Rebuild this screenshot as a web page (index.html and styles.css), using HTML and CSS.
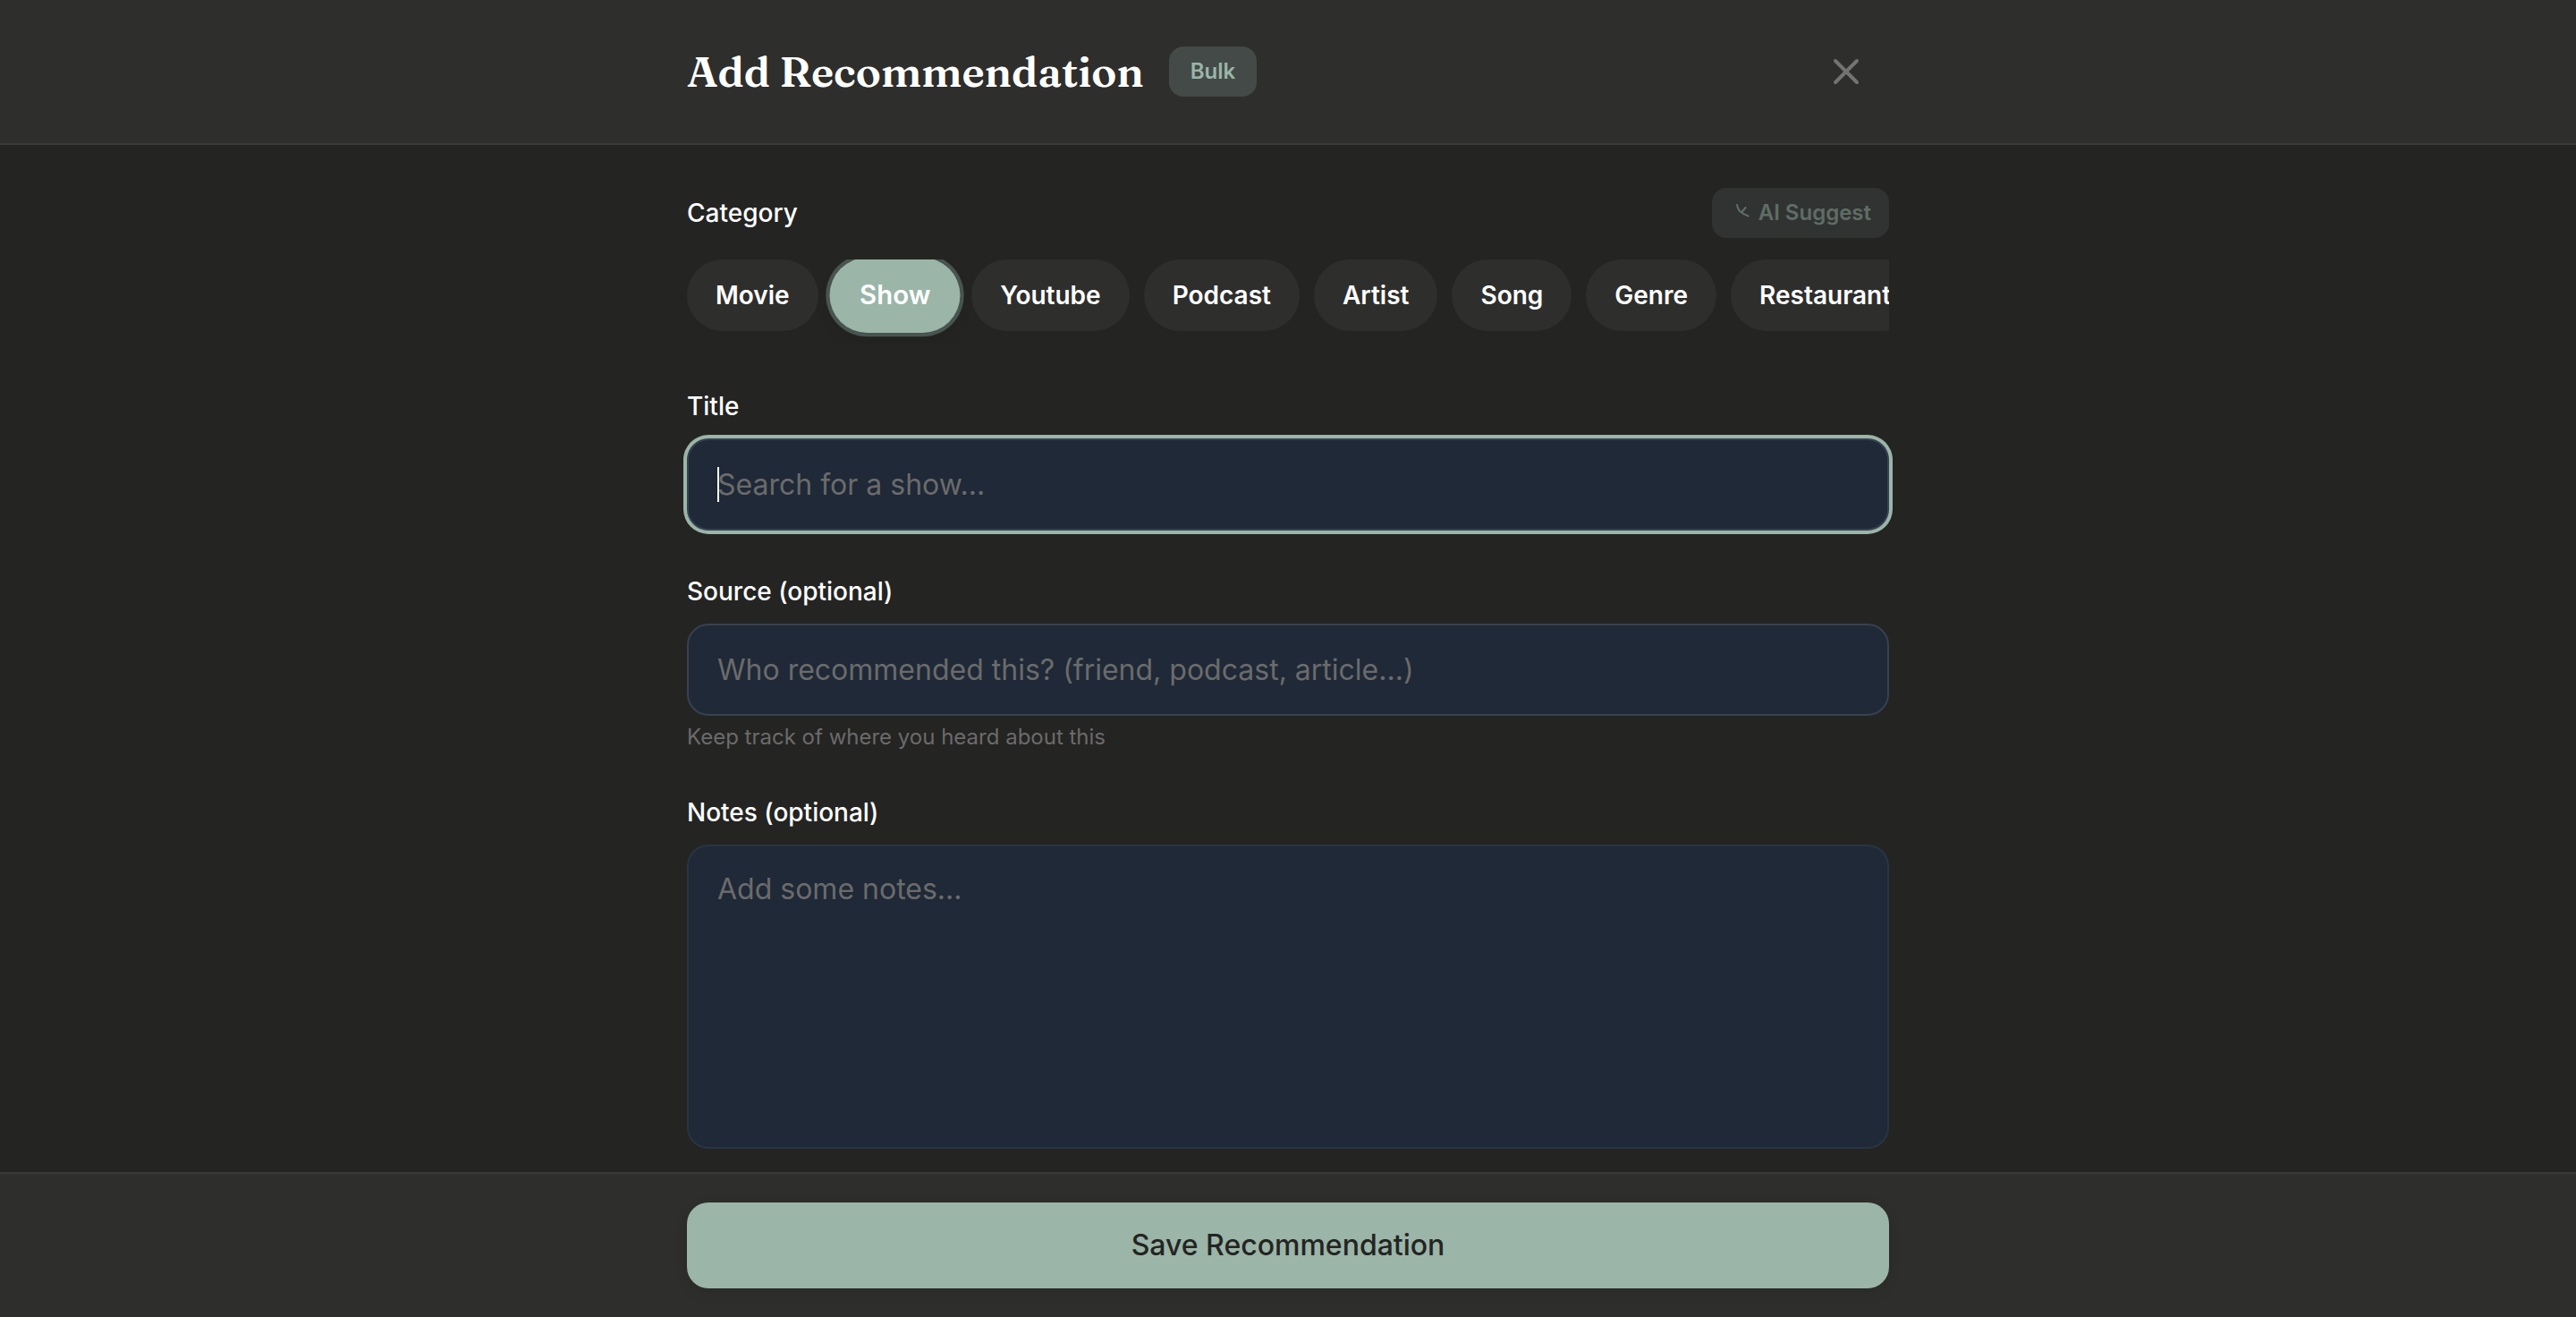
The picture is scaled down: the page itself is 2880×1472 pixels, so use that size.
FILE: index.html
```html
<!DOCTYPE html>
<html lang="en">
<head>
<meta charset="utf-8">
<meta name="viewport" content="width=device-width, initial-scale=1">
<title>Add Recommendation</title>
<link rel="stylesheet" href="styles.css">
</head>
<body>
<form class="screen">
  <header class="topbar">
    <div class="container topbar-row">
      <div class="heading">
        <h1 class="title">Add Recommendation</h1>
        <button type="button" class="chip-button">Bulk</button>
      </div>
      <button type="button" class="close" aria-label="Close">
        <svg class="close-icon" viewBox="0 0 24 24" fill="none" stroke="currentColor" stroke-width="2" stroke-linecap="round" stroke-linejoin="round"><path d="M6 18L18 6M6 6l12 12"/></svg>
      </button>
    </div>
  </header>

  <main class="content">
    <div class="container fields">
      <section class="category">
        <div class="category-head">
          <h2 class="label">Category</h2>
          <button type="button" class="chip-button suggest" disabled>
            <svg class="suggest-icon" viewBox="0 0 28 28" fill="none" stroke="currentColor" stroke-width="2" stroke-linecap="round" stroke-linejoin="round"><path d="M8 5C8.500 8 10 11.500 13 13.500C15 15.200 18 16.500 20.500 17.500M13 13.500L17.500 8"/></svg>
            AI Suggest
          </button>
        </div>
        <div class="pills">
          <button type="button" class="pill">Movie</button>
          <button type="button" class="pill pill-active" aria-pressed="true">Show</button>
          <button type="button" class="pill">Youtube</button>
          <button type="button" class="pill">Podcast</button>
          <button type="button" class="pill">Artist</button>
          <button type="button" class="pill">Song</button>
          <button type="button" class="pill">Genre</button>
          <button type="button" class="pill">Restaurant</button>
        </div>
      </section>

      <div class="field">
        <label class="label" for="title">Title</label>
        <div class="input-wrap">
          <input class="input input-focused" id="title" type="text" placeholder="Search for a show...">
          <span class="caret" aria-hidden="true"></span>
        </div>
      </div>

      <div class="field">
        <label class="label" for="source">Source (optional)</label>
        <input class="input" id="source" type="text" placeholder="Who recommended this? (friend, podcast, article...)" aria-describedby="source-hint">
        <p class="hint" id="source-hint">Keep track of where you heard about this</p>
      </div>

      <div class="field">
        <label class="label" for="notes">Notes (optional)</label>
        <textarea class="input notes" id="notes" placeholder="Add some notes..."></textarea>
      </div>
    </div>
  </main>

  <footer class="bottombar">
    <div class="container">
      <button type="submit" class="save">Save Recommendation</button>
    </div>
  </footer>
</form>
</body>
</html>
```
FILE: styles.css
```css
:root {
  --page: #242422;
  --surface: #2e2e2c;
  --line: #3a3a38;
  --sage: #9bb5a8;
  --field: #1f2937;
  --field-line: #374151;
  --muted: #6b6b6b;
}

*, *::before, *::after { box-sizing: border-box; }

body {
  margin: 0;
  background: var(--page);
  color: #fff;
  font-family: Inter, "Liberation Sans", sans-serif;
}

button, input, textarea { font: inherit; color: inherit; }
button { border: 0; cursor: pointer; }
h1, h2, p { margin: 0; }

.screen {
  display: flex;
  flex-direction: column;
  height: 100vh;
}

.container {
  width: 100%;
  max-width: 1344px;
  margin: 0 auto;
}

.topbar {
  padding: 32px;
  background: var(--surface);
  border-bottom: 2px solid var(--line);
}

.topbar-row, .heading, .category-head {
  display: flex;
  align-items: center;
}

.topbar-row, .category-head { justify-content: space-between; }
.heading { gap: 28px; }

.title {
  font-family: Fraunces, "Liberation Serif", serif;
  font-size: 47px;
  line-height: 64px;
  font-weight: 600;
}

.chip-button {
  display: flex;
  align-items: center;
  gap: 4px;
  padding: 12px 24px;
  border-radius: 16px;
  background: #434a47;
  color: var(--sage);
  font-size: 24px;
  line-height: 32px;
  font-weight: 600;
}

.suggest {
  padding: 12px 20px;
  background: #3c4241;
  opacity: 0.5;
}

.suggest-icon { width: 28px; height: 28px; }

.close {
  display: flex;
  padding: 24px;
  background: none;
  color: #737373;
}

.close-icon { width: 48px; height: 48px; }

.content {
  flex: 1;
  min-height: 0;
  padding: 48px 32px 24px;
  overflow-y: auto;
  scrollbar-width: none;
}

.fields {
  display: flex;
  flex-direction: column;
  gap: 48px;
}

.category {
  display: flex;
  flex-direction: column;
  gap: 24px;
}

.label {
  font-size: 28px;
  line-height: 40px;
  font-weight: 500;
}

.pills {
  display: flex;
  gap: 16px;
  padding-bottom: 16px;
  overflow-x: auto;
  scrollbar-width: none;
}

.pill {
  flex: none;
  padding: 20px 32px;
  border-radius: 40px;
  background: #2e2e2d;
  font-size: 28px;
  line-height: 40px;
  font-weight: 600;
}

.pill-active {
  background: var(--sage);
  box-shadow: 0 0 0 4px #485450, 0 8px 12px 4px rgba(0, 0, 0, 0.06);
  transform: scale(1.05);
}

.field {
  display: flex;
  flex-direction: column;
}

.field .label { margin-bottom: 16px; }

.input-wrap { position: relative; }

.input {
  display: block;
  width: 100%;
  padding: 30px 32px;
  border: 2px solid var(--field-line);
  border-radius: 24px;
  outline: 0;
  background: var(--field);
  font-size: 32px;
  line-height: 39px;
}

input.input { height: 103px; }
.input::placeholder { color: var(--muted); opacity: 1; }
.input-focused { box-shadow: 0 0 0 4px var(--sage); }

.caret {
  position: absolute;
  top: 32px;
  left: 34px;
  width: 2px;
  height: 39px;
  background: #fff;
}

.notes {
  height: 340px;
  padding: 24px 32px;
  border-color: #283544;
  line-height: 48px;
  resize: none;
}

.hint {
  margin-top: 8px;
  color: var(--muted);
  font-size: 24px;
  line-height: 32px;
}

.bottombar {
  padding: 32px;
  background: var(--surface);
  border-top: 2px solid var(--line);
}

.save {
  display: block;
  width: 100%;
  padding: 24px;
  border-radius: 24px;
  background: var(--sage);
  box-shadow: 0 4px 16px rgba(0, 0, 0, 0.1);
  color: var(--page);
  font-size: 32px;
  line-height: 48px;
  font-weight: 500;
}
```
